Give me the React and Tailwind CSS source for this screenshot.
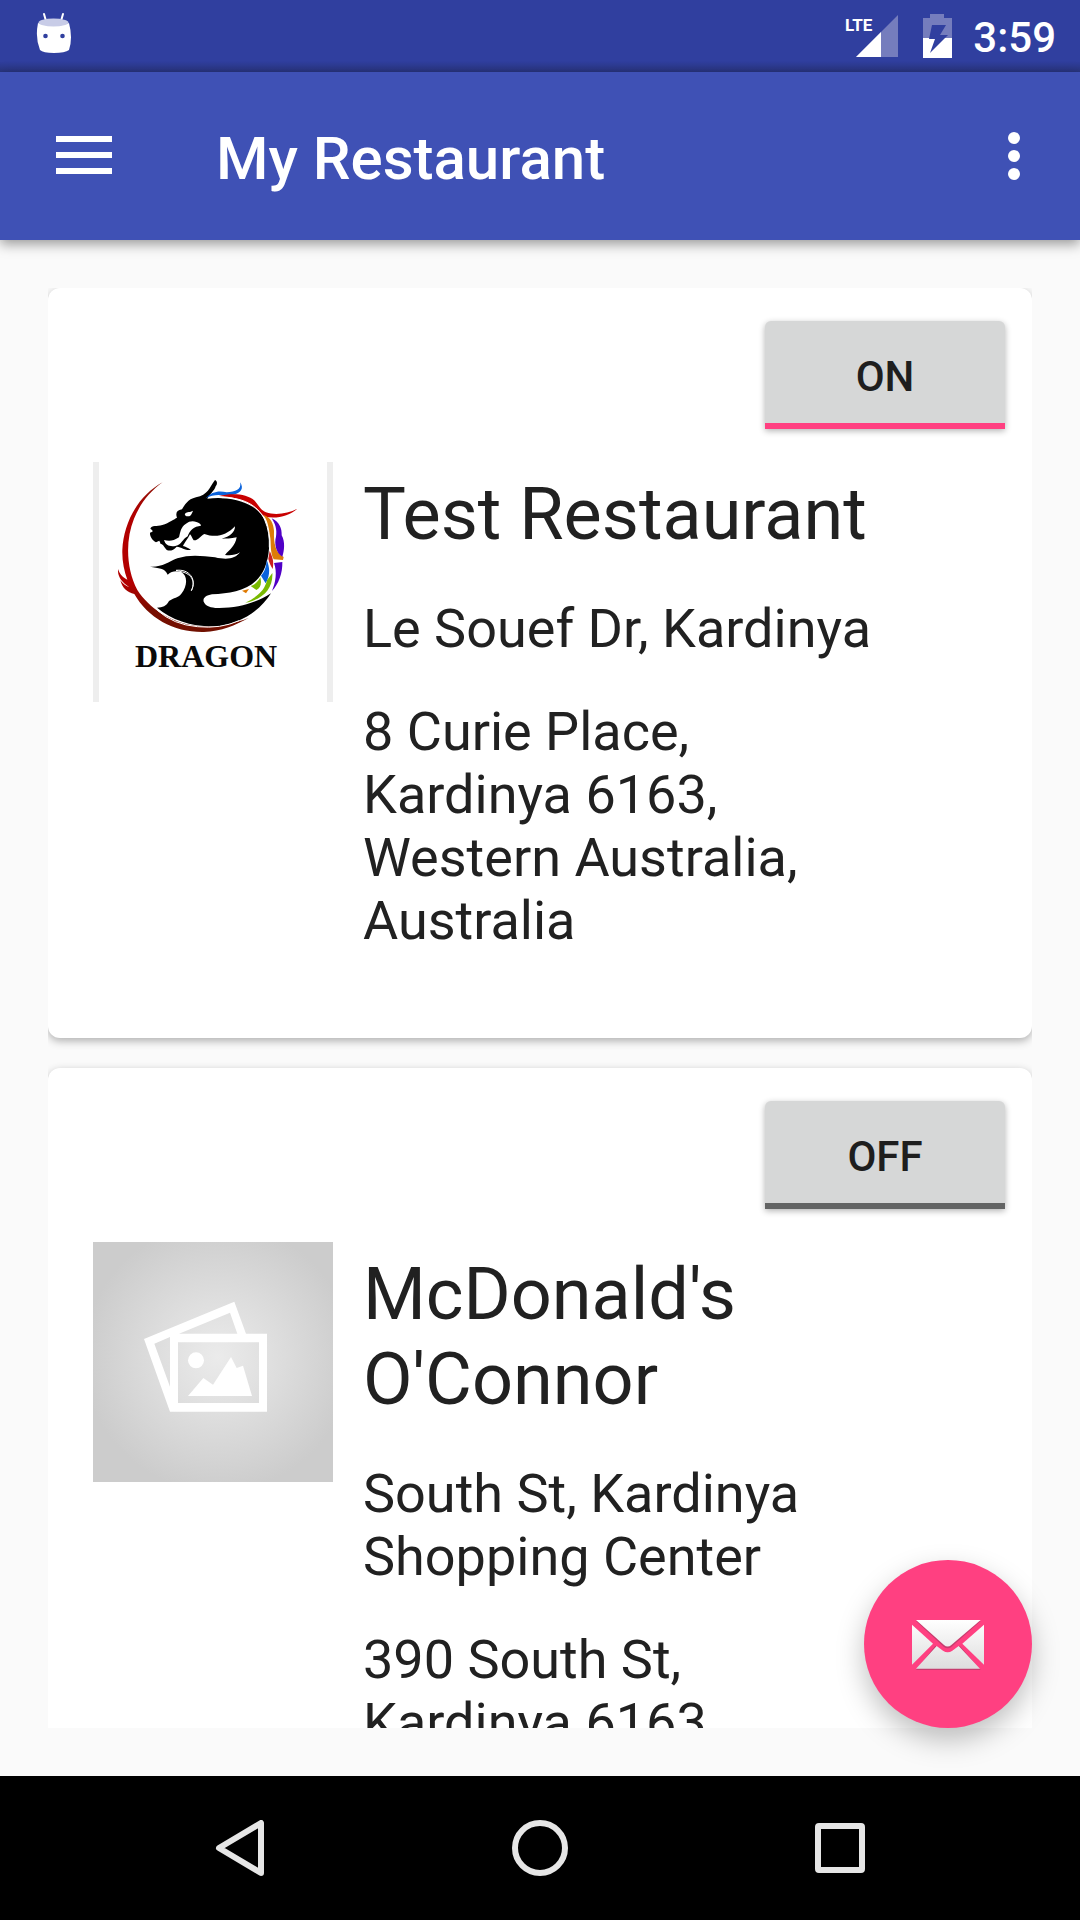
import React from "react";

function StatusBar() {
  return (
    <div className="flex h-[72px] shrink-0 items-center justify-between bg-linear-to-b from-[#303f9f] from-85% to-[#29357f] pl-9 pr-6 text-white">
      <svg className="h-[72px] w-9" viewBox="0 0 36 72" role="img" aria-label="Android debugging">
        <path d="M8 14l2 7M27 14l-2 7" stroke="#fff" strokeWidth="2" strokeLinecap="round" />
        <path d="M2 23Q18 29 33 23Q37 38 33 50Q29 53 18 53T4 50Q-1 38 2 23z" fill="#fff" />
        <ellipse cx="17.500" cy="22.500" rx="15" ry="4" fill="#c8cce7" />
        <circle cx="9.500" cy="36" r="2.300" fill="#303f9f" />
        <circle cx="26.500" cy="36" r="2.300" fill="#303f9f" />
      </svg>
      <div className="flex items-center">
        <svg className="h-[72px] w-14" viewBox="0 0 56 72" role="img" aria-label="LTE signal">
          <path d="M54 15V57H12z" fill="#757dbd" />
          <path d="M37 32V57H12z" fill="#fff" />
          <path d="M0 15h30v19H0z" fill="#303f9f" />
          <text x="1" y="31" fill="#fff" fontFamily="Roboto, sans-serif" fontSize="17" fontWeight="700">LTE</text>
        </svg>
        <svg className="ml-[22px] h-[72px] w-[30px]" viewBox="0 0 30 72" role="img" aria-label="Battery charging">
          <path d="M1 18h7v-4h14v4h8v20H1z" fill="#757dbd" />
          <path d="M1 38h29v20H1z" fill="#fff" />
          <path d="M10 25h14l-6 10h8L8 53l5-14H7z" fill="#303f9f" />
        </svg>
        <span className="ml-[21px] pt-0.5 text-[42px] leading-[49px] font-medium">3:59</span>
      </div>
    </div>
  );
}

function AppBar() {
  return (
    <header className="relative flex h-[168px] shrink-0 items-center bg-[#3f51b5] text-white shadow-[0_4px_12px_rgba(0,0,0,0.4)]">
      <button type="button" aria-label="Open menu" className="flex h-[168px] w-[168px] items-center justify-center">
        <svg className="size-14" viewBox="0 0 56 56" fill="#fff">
          <path d="M0 8h56v6H0zM0 24h56v6H0zM0 40h56v6H0z" />
        </svg>
      </button>
      <h1 className="ml-12 flex-1 pt-1.5 text-[60px] leading-[70px] font-medium">My Restaurant</h1>
      <button type="button" aria-label="More options" className="flex h-[168px] w-[132px] items-center justify-center">
        <svg className="h-12 w-3" viewBox="0 0 12 48" fill="#fff">
          <circle cx="6" cy="6" r="6" />
          <circle cx="6" cy="24" r="6" />
          <circle cx="6" cy="42" r="6" />
        </svg>
      </button>
    </header>
  );
}

function DragonLogo() {
  return (
    <svg className="size-60 shrink-0" viewBox="39 36 720 720" role="img" aria-label="Dragon logo">
      <defs>
        <linearGradient id="arc" x1="0" y1="0" x2="0" y2="1">
          <stop offset="0" stopColor="#8a1508" />
          <stop offset=".2" stopColor="#b00000" />
          <stop offset=".68" stopColor="#b30000" />
          <stop offset=".85" stopColor="#7a0d00" />
          <stop offset="1" stopColor="#701000" />
        </linearGradient>
      </defs>
      <path fill="#eee" d="M39 36h18v720H39zM741 36h18v720h-18z" />
      <path fill="url(#arc)" d="M248 97C176 136 131 215 127 300C126 332 132 362 142 389C128 382 120 374 114 357C113 374 119 387 134 401L148 412C137 408 128 401 121 391C127 415 142 427 163 432C204 505 284 548 372 546C424 543 466 526 507 503C460 522 405 534 350 528C270 517 208 475 172 420C138 355 136 270 162 206C181 160 210 124 248 97Z" />
      <path d="M405 90C412 93 413 101 407 109C404 121 391 131 382 146C430 139 482 148 518 170C552 192 565 226 567 265C570 313 559 357 535 385C500 424 449 430 396 433C377 436 368 445 371 455C377 469 393 473 413 474C472 475 528 459 573 430C544 479 478 526 401 529C334 530 275 510 231 473C248 473 259 468 267 453C282 442 294 444 304 431C323 407 323 377 304 366C287 362 276 363 263 374C255 352 235 356 210 350C247 352 264 336 292 325C328 313 365 317 405 322C442 331 466 326 480 307C466 316 450 317 435 315C450 297 465 290 470 262C452 267 438 265 425 266C449 260 465 247 465 229C439 257 407 264 373 252C361 257 356 272 341 271C336 264 334 256 330 253C324 265 313 280 309 288C316 290 325 294 333 300C316 302 306 292 290 290C281 299 273 304 262 301C252 293 249 280 242 282L238 272L228 277C216 271 209 258 210 248C219 246 222 243 211 236C215 224 230 231 247 225C268 218 283 207 291 203C286 190 290 180 306 178C315 165 322 148 348 142C384 135 388 113 405 90Z" />
      <path fill="#fff" d="M252 270C265 274 280 274 297 262C301 246 302 231 318 221C330 211 346 211 361 222L363 227C342 229 329 241 323 259C306 267 307 284 286 288C269 290 257 287 252 270Z" />
      <path fill="#fff" d="M315 191C322 183 330 188 339 182C336 191 331 200 324 199C317 199 313 195 315 191Z" />
      <path d="M288 361C329 356 351 389 334 422C350 389 328 369 303 365Z" fill="#000" stroke="#fff" strokeWidth="3" />
      <path fill="#0b63dc" d="M377 145C395 124 418 121 440 127C466 126 486 118 480 97C494 116 481 130 460 134C432 140 405 127 377 145Z" />
      <path fill="#c80000" d="M417 138C454 129 500 130 524 152C538 169 544 182 558 187C588 197 624 190 652 176C628 198 590 207 555 200C536 187 530 174 511 163C482 146 450 139 417 138Z" />
      <path fill="none" stroke="#fff" strokeWidth="3" d="M425 143C500 141 541 176 555 212Q570 247 568 292" />
      <path fill="#dc7c08" d="M550 194C574 203 580 221 582 242C581 280 585 306 611 321L609 330L581 328C569 306 574 277 570 258C566 228 562 211 550 194Z" />
      <path fill="#5000c6" d="M575 205C599 216 606 236 605 256C616 276 613 302 607 320C588 309 582 280 588 260C592 238 585 220 575 205ZM582 339L607 336C608 369 596 402 576 423C587 396 592 367 582 339Z" />
      <path fill="#cb1e1e" d="M569 303C576 318 583 332 578 357C573 348 567 337 565 326Z" />
      <path fill="#0a62db" d="M560 330C568 348 573 373 557 400L543 377C555 364 559 348 560 330Z" />
      <path fill="#78b900" d="M577 369C580 416 548 449 496 458C536 439 555 418 561 391ZM541 382C546 402 541 416 529 420L512 408C527 403 534 394 541 382Z" />
      <path fill="#df7900" d="M486 422L507 417L498 430Z" />
      <path fill="none" stroke="#fff" strokeWidth="3" d="M232 481Q280 524 352 530Q422 537 477 512" />
      <text x="165" y="650" fontSize="96" fontWeight="700" fontFamily="'Liberation Serif', serif" fill="#0a0a0a">DRAGON</text>
    </svg>
  );
}

function PhotoPlaceholder() {
  return (
    <svg className="size-60 shrink-0" viewBox="39 36 720 720" role="img" aria-label="No photo">
      <defs>
        <radialGradient id="glow" cx=".52" cy=".48" r=".56">
          <stop offset="0" stopColor="#ebebeb" />
          <stop offset=".4" stopColor="#dfdfdf" />
          <stop offset="1" stopColor="#cccccc" />
        </radialGradient>
      </defs>
      <path fill="url(#glow)" d="M39 36h720v720H39z" />
      <path fill="#fff" fillRule="evenodd" d="M192 327L463 215L498 311H561V545H270ZM223 341L270 470V321ZM297 311H472L450 248ZM294 337V519H537V337Z" />
      <circle cx="348" cy="391" r="24" fill="#fff" />
      <path fill="#fff" d="M324 498L370 444L399 464L453 381L470 414L489 407L516 498Z" />
    </svg>
  );
}

function Toggle({ on }) {
  return (
    <button
      type="button"
      aria-pressed={on}
      className={
        "h-[108px] w-60 rounded-t-md border-b-6 bg-[#d6d7d7] pt-2 text-[42px] leading-[49px] font-medium text-[#1e1e1e] shadow-[0_2px_6px_rgba(0,0,0,0.3)] " +
        (on ? "border-[#ff4081]" : "border-[#636464]")
      }
    >
      {on ? "ON" : "OFF"}
    </button>
  );
}

function RestaurantCard({ name, area, address, on, picture }) {
  return (
    <article className="shrink-0 rounded-xl bg-white pt-[33px] pb-[86px] shadow-[0_3px_8px_rgba(0,0,0,0.3)]">
      <div className="flex justify-end pr-[27px]">
        <Toggle on={on} />
      </div>
      <div className="mt-[33px] flex gap-[30px] pl-[45px]">
        {picture}
        <div className="mr-[150px] flex min-w-0 flex-1 flex-col gap-10 pt-2.5 text-[54px] leading-[63px]">
          <h2 className="text-[72px] leading-[85px]">{name}</h2>
          <p>{area}</p>
          <p>{address}</p>
        </div>
      </div>
    </article>
  );
}

function MailButton() {
  return (
    <button
      type="button"
      aria-label="Send mail"
      className="absolute right-12 bottom-12 flex size-[168px] items-center justify-center rounded-full bg-[#ff4081] pt-0.5 shadow-[0_12px_28px_rgba(0,0,0,0.25)]"
    >
      <svg className="h-[50px] w-[72px]" viewBox="216 269 216 150">
        <defs>
          <linearGradient id="paper" gradientUnits="userSpaceOnUse" x1="0" y1="269" x2="0" y2="417">
            <stop offset="0" stopColor="#ffffff" />
            <stop offset="1" stopColor="#dddddd" />
          </linearGradient>
        </defs>
        <g fill="#a23a62" opacity=".6">
          <path d="M228 272H422L335 349Q323 358 311 349Z" />
          <path d="M228 419L286 346L307 362Q323 371 339 362L359 346L422 419Z" />
        </g>
        <g fill="url(#paper)">
          <path d="M228 269H422L334 344Q323 353 312 344Z" />
          <path d="M216 283L279 340L216 403Z" />
          <path d="M432 283L367 340L432 403Z" />
          <path d="M228 415L290 347L309 361Q323 370 337 361L356 347L420 415Z" />
        </g>
      </svg>
    </button>
  );
}

function NavBar() {
  return (
    <nav aria-label="System" className="flex h-36 shrink-0 bg-black px-[90px]">
      <button type="button" aria-label="Back" className="flex flex-1 items-center justify-center">
        <svg className="size-14" viewBox="0 0 56 56" fill="none" stroke="#e6e6e6" strokeWidth="6" strokeLinejoin="round">
          <path d="M49 3V53L7 28Z" />
        </svg>
      </button>
      <button type="button" aria-label="Home" className="flex flex-1 items-center justify-center">
        <svg className="size-14" viewBox="0 0 56 56" fill="none" stroke="#e6e6e6" strokeWidth="6">
          <circle cx="28" cy="28" r="25" />
        </svg>
      </button>
      <button type="button" aria-label="Recent apps" className="flex flex-1 items-center justify-center">
        <svg className="size-14" viewBox="0 0 56 56" fill="none" stroke="#e6e6e6" strokeWidth="6">
          <rect x="6" y="6" width="44" height="44" rx="1" />
        </svg>
      </button>
    </nav>
  );
}

export default function App() {
  return (
    <div className="flex h-screen flex-col bg-[#fafafa] font-[Roboto,sans-serif] text-[#212121]">
      <StatusBar />
      <AppBar />
      <main className="relative flex min-h-0 flex-1 flex-col p-12">
        <div className="flex min-h-0 flex-1 flex-col gap-[30px] overflow-y-auto [scrollbar-width:none]">
          <RestaurantCard
            name="Test Restaurant"
            area="Le Souef Dr, Kardinya"
            address="8 Curie Place, Kardinya 6163, Western Australia, Australia"
            on={true}
            picture={<DragonLogo />}
          />
          <RestaurantCard
            name="McDonald's O'Connor"
            area="South St, Kardinya Shopping Center"
            address="390 South St, Kardinya 6163, Western Australia, Australia"
            on={false}
            picture={<PhotoPlaceholder />}
          />
        </div>
        <MailButton />
      </main>
      <NavBar />
    </div>
  );
}
